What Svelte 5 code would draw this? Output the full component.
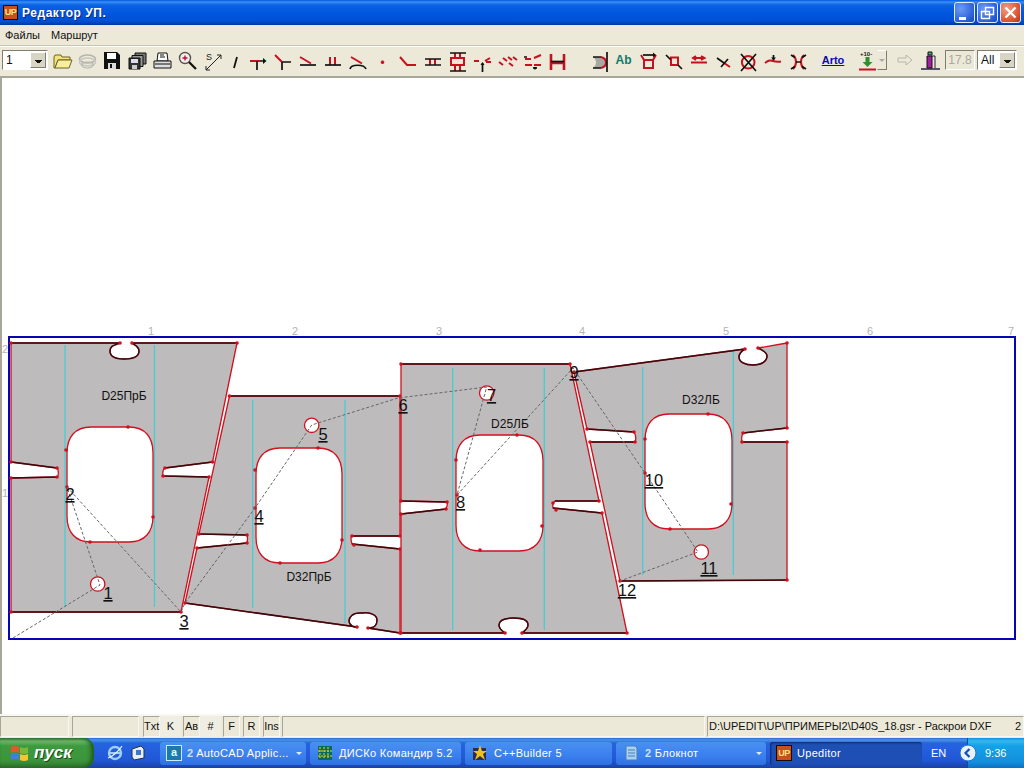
<script>
	// toolbar icons: k = black strokes, r = red strokes, drawn in a 25x24 box
	const leftTools = [
		{ k: 'M12 13V22M15 13H20', r: 'M5 13H15', a: 'M18 10l3.500 3-3.500 3z' },
		{ k: 'M12 14V22M12 14H21', r: 'M5 7L12 14' },
		{ k: 'M5 17H21', r: 'M5 9L16 15.500' },
		{ k: 'M5 17H21', r: 'M10 9V17M15 9V17' },
		{ k: 'M5 21C6 16 19 16 21 21', r: 'M6 9L17 15.500' },
		{ r: 'M12.500 12.500V16M10.800 14.200H14.200' },
		{ r: 'M5 9L12 17H21' },
		{ k: 'M5 11H21M5 17H21', r: 'M10 11V17M15 11V17' },
		{ k: 'M5 5H21M5 23H21', r: 'M10 5V10M15 5V10M10 17V23M15 17V23M6 10H19V17H6z' },
		{ k: 'M12.500 15V24', r: 'M4 13H9M15 13L20 10M16 14H21', a: 'M10.500 17l2-3 2 3z' },
		{ r: 'M4 14L8 17M8 10L12 13M14 15L18 18M13 9L17 12M18 9L22 12' },
		{ k: 'M4 9H7M13 20H17', r: 'M5 11H11M14 10L21 7M5 17H12M14 17H21', a: 'M13 19l2 3 2-3z' },
		{ k: 'M6 13.500H19', r: 'M6 6V22M19 6V22M6 15H19', thick: true }
	];
	const rightTools = [
		{ k: 'M7 9H15M7 20H15M21 4V24', r: 'M15 9C19 10 20 12 20 14.500C20 17 19 19 15 20', hatch: true },
		{ text: 'Ab' },
		{ k: 'M7 7H19', r: 'M5 7L8 12V20H17V12L20 7M8 12H17', a: 'M17 4.500l3 2.500-3 2.500z' },
		{ k: 'M5 7L9.500 11.500M17 17L21 21', r: 'M9 9.500H17V17H10V9.500' },
		{ r: 'M5 14.500H21M8 10H18M10 8L7 10L10 12M15 8L18.500 10L15 12' },
		{ k: 'M6 10L13 15M10 19L17 11', r: 'M13 15L19 19' },
		{ k: 'M5 6L20 23M20 6L5 23', r: 'M18.500 14.300A6.300 6.300 0 1 1 5.900 14.300A6.300 6.300 0 1 1 18.500 14.300' },
		{ k: 'M12.500 7V12', r: 'M4 15C8 12 9 12 12 13C15 14 17 14 20 13.500', a: 'M10 9.500l2.500 3 2.500-3z' },
		{ k: 'M5 7L9 9.500M20 7L16 9.500M5 21L9 18.500M20 21L16 18.500M10 14H15', r: 'M7 7C11 11 11 17 7 21M18 7C14 11 14 17 18 21' }
	];

	// outline of each sheet, slots and notches included; dark = edges the editor draws over in black
	const parts = [
		{
			d: 'M11 343H120C116 345 110 345 110 351C110 357 116 359 124 359C134 359 139 356 139 351C139 346 134 345 132 343H237L212.500 462L165 468Q162 470 163 476L209 477L181 612H11V478L57 477Q59 476 58 470L57 468L11 462Z',
			dark: 'M11 343H120M120 343C116 345 110 345 110 351C110 357 116 359 124 359C134 359 139 356 139 351C139 346 134 345 132 343M132 343H237M212.500 462L165 468M163 476L209 477M181 612H11M11 478L57 477M57 468L11 462',
			hole: [67, 427, 153, 542],
			dot: [97.7, 584],
			cyan: [[65, 345, 607], [154.5, 345, 607]],
			marks: [[11, 343], [237, 343], [181, 612], [11, 612], [11, 462], [11, 478], [57, 468], [57, 477], [165, 468], [163, 476], [212.5, 462], [209, 477], [120, 343], [132, 343], [66, 450], [67, 487], [128, 427], [90, 542], [153, 517]]
		},
		{
			d: 'M229.500 396H400V536H352Q350 538 352 544L400 549V633L368 628C376 628 377 624 377 620C377 614 368 612 362 613C352 612 349 618 349 621C349 625 354 628 357 627L185 603L197 548L247 543Q248 538 247 535L199 534Z',
			dark: 'M229.500 396H400M400 536H352M352 544L400 549M400 633L368 628C376 628 377 624 377 620C377 614 368 612 362 613C352 612 349 618 349 621C349 625 354 628 357 627L185 603M197 548L247 543M247 535L199 534',
			hole: [256, 448, 342, 563],
			dot: [311.7, 425.3],
			cyan: [[252.7, 400, 608], [345, 400, 623]],
			marks: [[229.5, 396], [400, 396], [400, 633], [185, 603], [199, 534], [197, 548], [247, 535], [247, 543], [352, 536], [354, 545], [400, 536], [400, 549], [357, 627], [368, 628], [255, 470], [255, 508], [342, 540], [318, 448], [280, 563]]
		},
		{
			d: 'M401 364H570L599 501H555Q552 503 553 508L602 513L627 633H522C526 630 528 628 528 625C528 620 522 618 514 618C504 618 499 620 499 625C499 629 502 631 505 633H401V514L446 509Q448 505 447 502L401 501Z',
			dark: 'M401 364H570M599 501H555M553 508L602 513M627 633H522C526 630 528 628 528 625C528 620 522 618 514 618C504 618 499 620 499 625C499 629 502 631 505 633H401M401 514L446 509M447 502L401 501',
			hole: [456, 435, 543, 551],
			dot: [486.7, 393],
			cyan: [[452.7, 368, 630], [544.3, 368, 630]],
			marks: [[401, 364], [570, 364], [627, 633], [401, 633], [401, 501], [401, 514], [447, 502], [446, 509], [553, 503], [556, 510], [599, 501], [602, 513], [505, 633], [522, 633], [456, 460], [457, 495], [542, 526], [517, 435], [480, 550]]
		},
		{
			d: 'M574 372L745 349C740 352 739 354 739 357C739 362 745 365 753 365C762 365 767 361 767 356C767 352 762 350 758 348L787 343V428L743 433Q741 437 742 442H787V580L620 581L590 442H635Q637 437 634 432L587 429Z',
			dark: 'M574 372L745 349C740 352 739 354 739 357C739 362 745 365 753 365C762 365 767 361 767 356C767 352 762 350 758 348M787 428L743 433M742 442H787M787 580L620 581M590 442H635M634 432L587 429',
			hole: [645, 414, 732, 529],
			dot: [701.3, 552],
			cyan: [[642.7, 367, 575], [733.3, 352, 575]],
			marks: [[574, 372], [787, 343], [787, 580], [620, 581], [587, 429], [634, 432], [635, 442], [590, 442], [743, 433], [742, 442], [787, 428], [787, 442], [745, 349], [758, 348], [645, 439], [645, 473], [731, 504], [708, 414], [670, 529]]
		}
	];

	function holePath([x1, y1, x2, y2]) {
		const rx = 24;
		const ry = 26;
		return `M${x1 + rx} ${y1}H${x2 - rx}C${x2 - 8} ${y1} ${x2} ${y1 + 10} ${x2} ${y1 + ry}V${y2 - ry}C${x2} ${y2 - 10} ${x2 - 8} ${y2} ${x2 - rx} ${y2}H${x1 + rx}C${x1 + 8} ${y2} ${x1} ${y2 - 10} ${x1} ${y2 - ry}V${y1 + ry}C${x1} ${y1 + 10} ${x1 + 8} ${y1} ${x1 + rx} ${y1}Z`;
	}

	const route = '13,638 100,585 67,487 181,612 185,603 255,508 311.7,425 398,398 486.7,387 457,495 573,368 645,473 698,552 620,581';

	const sheetNames = [
		{ t: 'D25ПрБ', x: 124, y: 400 },
		{ t: 'D32ПрБ', x: 309, y: 581 },
		{ t: 'D25ЛБ', x: 510, y: 428 },
		{ t: 'D32ЛБ', x: 701, y: 404 }
	];

	const routeNums = [
		[1, 108, 599], [2, 70, 500], [3, 184, 627], [4, 259, 522], [5, 323, 440], [6, 403, 411],
		[7, 491.5, 401], [8, 460.5, 508], [9, 574, 378], [10, 654, 486], [11, 709, 574], [12, 627, 596]
	];

	const rulerTop = [[151, 1], [295, 2], [439, 3], [582, 4], [726, 5], [870, 6], [1011, 7]];

	const flags = [
		{ t: 'Txt', w: 17, left: 143 },
		{ t: 'K', w: 21, left: 160, flat: true },
		{ t: 'Ав', w: 17, left: 183 },
		{ t: '#', w: 21, left: 200, flat: true },
		{ t: 'F', w: 17, left: 223 },
		{ t: 'R', w: 17, left: 243 },
		{ t: 'Ins', w: 17, left: 263 }
	];
</script>

<div class="window">
	<header class="titlebar">
		<span class="up-icon">UP</span>
		<span class="title">Редактор УП.</span>
		<div class="caption-btns">
			<button class="cap"><svg width="21" height="21" viewBox="0 0 21 21"><path d="M5 15h7v3H5z" fill="#fff" /></svg></button>
			<button class="cap"><svg width="21" height="21" viewBox="0 0 21 21"><path d="M8.500 5.500h8v7h-8zM4.500 9.500h8v7h-8z" fill="none" stroke="#fff" stroke-width="1.400" /></svg></button>
			<button class="cap close"><svg width="21" height="21" viewBox="0 0 21 21"><path d="M5.500 5.500l10 10M15.500 5.500l-10 10" stroke="#fff" stroke-width="2.400" /></svg></button>
		</div>
	</header>

	<nav class="menu">
		<span>Файлы</span>
		<span>Маршрут</span>
	</nav>

	<div class="toolbar">
		<div class="combo num"><span>1</span><i class="drop"></i></div>

		<svg class="tool" viewBox="0 0 25 24"><path d="M4 9l1-2h6l1 2h8v3H8L5 20H4z" fill="#f4e27a" stroke="#6b6420" /><path d="M8 12h14l-3 8H5z" fill="#f8ef9e" stroke="#6b6420" /></svg>
		<svg class="tool" viewBox="0 0 25 24"><ellipse cx="12.500" cy="11" rx="8" ry="4" fill="none" stroke="#b5b5ad" stroke-width="1.600" /><ellipse cx="12.500" cy="14" rx="8" ry="4" fill="none" stroke="#c8c8c0" stroke-width="1.600" /><ellipse cx="12.500" cy="17" rx="6" ry="3" fill="none" stroke="#b5b5ad" /></svg>
		<svg class="tool" viewBox="0 0 25 24"><path d="M4 4h13l3 3v14H4z" fill="#111" /><path d="M7 5h9v6H7z" fill="#fff" /><path d="M8 15h8v6H8z" fill="#ddd" /><path d="M10 16h2v4h-2z" fill="#111" /></svg>
		<svg class="tool" viewBox="0 0 25 24"><path d="M10 5h11v11H10z" fill="#777" stroke="#111" /><path d="M7 7.500h11v11H7z" fill="#999" stroke="#111" /><path d="M4 10h11v11H4z" fill="#333" stroke="#111" /><path d="M6 11h7v4H6z" fill="#dde" /><path d="M7 17h5v4H7z" fill="#ccc" /></svg>
		<svg class="tool" viewBox="0 0 25 24"><path d="M8 5h9l1 8H7z" fill="#fff" stroke="#111" /><path d="M10 7h4M10 9h5" stroke="#111" /><path d="M4 13h17v7H4z" fill="#ddd" stroke="#111" /><path d="M5 16h15" stroke="#111" /></svg>
		<svg class="tool" viewBox="0 0 25 24"><circle cx="10" cy="10" r="5.500" fill="#f5eef0" stroke="#555" stroke-width="1.400" /><path d="M10 7.500v5M7.500 10h5" stroke="#c01030" stroke-width="1.400" /><path d="M14 14l7 7" stroke="#111" stroke-width="2.200" /></svg>
		<svg class="tool" viewBox="0 0 25 24"><path d="M6 22L21 7M6 22v-4M6 22h4M21 7h-4M21 7v4" fill="none" stroke="#222" /><text x="6" y="12" class="s-mark">S</text></svg>
		<svg class="tool narrow" viewBox="0 0 20 24"><path d="M12 9l-3 11" stroke="#111" stroke-width="1.800" /></svg>

		{#each leftTools as tool}
			<svg class="tool" viewBox="0 0 25 24">
				{#if tool.r}<path class="red" class:thick={tool.thick} d={tool.r} />{/if}
				{#if tool.k}<path class="black" d={tool.k} />{/if}
				{#if tool.a}<path d={tool.a} fill="#111" />{/if}
			</svg>
		{/each}

		<span class="tool-gap"></span>

		{#each rightTools as tool}
			{#if tool.text}
				<span class="ab">{tool.text}</span>
			{:else}
				<svg class="tool" viewBox="0 0 25 24">
					{#if tool.hatch}<path d="M7 9H15C19 10 20 12 20 14.500C20 17 19 19 15 20H7C11 17 11 12 7 9z" fill="#a8a8a0" />{/if}
					{#if tool.r}<path class="red" d={tool.r} />{/if}
					{#if tool.k}<path class="black" d={tool.k} />{/if}
					{#if tool.a}<path d={tool.a} fill="#111" />{/if}
				</svg>
			{/if}
		{/each}

		<span class="arto">Arto</span>

		<svg class="tool" viewBox="0 0 25 24"><text x="5" y="8" class="tiny">+10-</text><path d="M10.500 9h4v5h3l-5 5-5-5h3z" fill="#2f8f2f" /><path d="M4 21.500h17" stroke="#c81020" stroke-width="2" /></svg>
		<span class="spin"><i></i></span>
		<svg class="tool arrow" viewBox="0 0 25 24"><path d="M5 10h8V7l6 5-6 5v-3H5z" fill="#ece9d8" stroke="#b8b6a8" /></svg>
		<svg class="tool" viewBox="0 0 25 24"><path d="M3 21h19" stroke="#556" stroke-width="2" /><path d="M9 8h5v12H9z" fill="#a020a0" stroke="#111" /><path d="M10 4h4v3h-4z" fill="#4a8" stroke="#111" /><path d="M14 8h3v12" fill="none" stroke="#223" /></svg>
		<div class="field">17.8</div>
		<div class="combo all"><span>All</span><i class="drop"></i></div>
	</div>

	<main class="canvas">
		<svg viewBox="0 78 1024 636" width="1024" height="636">
			<rect x="9" y="337" width="1006" height="302" fill="#fff" stroke="#0505b5" stroke-width="2" />

			{#each rulerTop as [x, n]}
				<text {x} y="335" class="ruler">{n}</text>
			{/each}
			<text x="5" y="353" class="ruler">2</text>
			<text x="5" y="497" class="ruler">1</text>

			{#each parts as p}
				<path d="{p.d}{holePath(p.hole)}" fill="#bdbbbc" fill-rule="evenodd" />
				<circle cx={p.dot[0]} cy={p.dot[1]} r="7.200" fill="#fff" />
				{#each p.cyan as [x, y1, y2]}
					<line x1={x} x2={x} {y1} {y2} class="bend" />
				{/each}
				<path d={p.d} class="edge" />
				<path d={p.dark} class="edge-dark" />
				<path d={holePath(p.hole)} class="edge" />
				<circle cx={p.dot[0]} cy={p.dot[1]} r="7.200" class="edge" />
				{#each p.marks as [x, y]}
					<circle cx={x} cy={y} r="1.800" fill="#d0101e" />
				{/each}
			{/each}

			<polyline points={route} class="route" />

			{#each sheetNames as s}
				<text x={s.x} y={s.y} class="sheet">{s.t}</text>
			{/each}
			{#each routeNums as [n, x, y]}
				<text {x} {y} class="num-mark">{n}</text>
			{/each}
		</svg>
	</main>

	<footer class="status">
		<span class="pane" style="left:0;width:69px"></span>
		<span class="pane" style="left:72px;width:67px"></span>
		{#each flags as f}
			<span class="pane flag" class:flat={f.flat} style="left:{f.left}px;width:{f.w}px">{f.t}</span>
		{/each}
		<span class="pane" style="left:282px;width:423px"></span>
		<span class="pane path" style="left:707px;width:317px">D:\UPEDIT\UP\ПРИМЕРЫ2\D40S_18.gsr - Раскрои DXF<b>2</b></span>
	</footer>

	<div class="taskbar">
		<button class="start">
			<svg width="22" height="20" viewBox="0 0 22 20"><path d="M2 4q4-2 8 0v6q-4-2-8 0z" fill="#e8552a" /><path d="M11 4q4 2 8 0v6q-4 2-8 0z" fill="#7ab839" /><path d="M2 11q4-2 8 0v6q-4-2-8 0z" fill="#3f7fe0" /><path d="M11 11q4 2 8 0v6q-4 2-8 0z" fill="#f3c52f" /></svg>
			<span>пуск</span>
		</button>
		<svg class="quick first" width="18" height="18" viewBox="0 0 18 18"><circle cx="9" cy="9" r="6" fill="none" stroke="#9fd0ff" stroke-width="2.400" /><path d="M4 9h10" stroke="#9fd0ff" stroke-width="2" /><path d="M2 14C6 13 13 7 16 2" fill="none" stroke="#e8f2ff" stroke-width="1.200" /></svg>
		<svg class="quick" width="18" height="18" viewBox="0 0 18 18"><path d="M3 5l9-3 3 3v9l-10 2-2-3z" fill="#e6eef8" stroke="#234" /><path d="M7 6h5v5H7z" fill="#3b78c8" /></svg>

		<div class="tasks">
			<div class="task" style="width:146px">
				<span class="acad">a</span>
				<span class="label"><em>2</em> AutoCAD Applic...</span>
				<i class="group"></i>
			</div>
			<div class="task" style="width:151px">
				<svg width="18" height="18" viewBox="0 0 18 18"><path d="M2 2h14v14H2z" fill="#0b6a5e" /><path d="M4 3v12M8 3v12M12 3v12M2 7h14M2 12h14" stroke="#e6d820" stroke-dasharray="2 1" /></svg>
				<span class="label">ДИСКо Командир 5.2</span>
			</div>
			<div class="task" style="width:147px">
				<svg width="18" height="18" viewBox="0 0 18 18"><path d="M2 4h13v12H2z" fill="#2b2d55" /><path d="M9 1l2 6h5l-4 3 2 6-5-4-5 4 2-6-4-3h5z" fill="#f0c020" /></svg>
				<span class="label">C++Builder 5</span>
			</div>
			<div class="task" style="width:150px">
				<svg width="18" height="18" viewBox="0 0 18 18"><path d="M4 2h9l2 2v12H4z" fill="#a8d0f0" stroke="#4a7fb5" /><path d="M6 6h7M6 9h7M6 12h7" stroke="#4a7fb5" /></svg>
				<span class="label"><em>2</em> Блокнот</span>
				<i class="group"></i>
			</div>
			<div class="task active" style="width:152px">
				<span class="up-icon small">UP</span>
				<span class="label">Upeditor</span>
			</div>
		</div>

		<span class="lang">EN</span>
		<div class="tray">
			<span class="chevron"><svg width="18" height="18" viewBox="0 0 18 18"><circle cx="9" cy="9" r="8" fill="#e8f2fc" stroke="#1f6fd0" /><path d="M10.500 5l-4 4 4 4" fill="none" stroke="#1450b0" stroke-width="2.200" /></svg></span>
			<span class="clock">9:36</span>
		</div>
	</div>
</div>

<style>
	:global(body) {
		margin: 0;
		background: #ece9d8;
	}

	.window {
		width: 1024px;
		height: 768px;
		display: flex;
		flex-direction: column;
		overflow: hidden;
		font-family: 'Liberation Sans', Arial, sans-serif;
		background: #ece9d8;
		color: #111;
	}

	/* title bar */
	.titlebar {
		height: 25px;
		flex: none;
		display: flex;
		align-items: center;
		padding: 0 3px;
		box-sizing: border-box;
		background: linear-gradient(#0058e0 0, #3a8ff2 2px, #0a62e4 5px, #0055dd 14px, #0050d4 21px, #0038a0 25px);
		color: #fff;
	}

	.up-icon {
		width: 15px;
		height: 15px;
		flex: none;
		display: inline-block;
		background: #c8501c;
		border: 1px solid #1a0a00;
		box-sizing: border-box;
		color: #ffe080;
		font: bold 9px/13px 'Liberation Sans', sans-serif;
		text-align: center;
		letter-spacing: -0.5px;
	}

	.title {
		margin-left: 4px;
		font-size: 12px;
		font-weight: bold;
		letter-spacing: 0.55px;
		text-shadow: 1px 1px #0a2a80;
	}

	.caption-btns {
		margin-left: auto;
		display: flex;
		gap: 2px;
	}

	.cap {
		width: 21px;
		height: 21px;
		padding: 0;
		border: 1px solid #e4ecff;
		border-radius: 3px;
		background: radial-gradient(circle at 30% 30%, #6b9cf0, #2a5fd8 70%, #1a46b8);
		display: block;
	}

	.cap svg {
		display: block;
		margin: -1px;
	}

	.cap.close {
		background: radial-gradient(circle at 30% 30%, #f0a080, #d8502c 70%, #b83010);
	}

	/* menu */
	.menu {
		height: 21px;
		flex: none;
		display: flex;
		align-items: center;
		gap: 11px;
		padding: 0 5px;
		box-sizing: border-box;
		font-size: 11px;
		border-bottom: 1px solid #c8c5b2;
	}

	/* toolbar */
	.toolbar {
		height: 32px;
		flex: none;
		display: flex;
		align-items: center;
		padding: 0 0 3px 2px;
		box-sizing: border-box;
		border-top: 1px solid #fff;
		border-bottom: 2px solid #a8a698;
	}

	.tool {
		width: 25px;
		height: 24px;
		flex: none;
	}

	.tool.narrow {
		width: 20px;
	}

	.tool-gap {
		width: 16px;
		flex: none;
	}

	.red,
	.black {
		fill: none;
	}

	.red {
		stroke: #c81020;
		stroke-width: 2;
	}

	.red.thick {
		stroke-width: 2.600;
	}

	.black {
		stroke: #111;
		stroke-width: 1.700;
	}

	.s-mark {
		font: 9px 'Liberation Sans', sans-serif;
		fill: #222;
	}

	.tiny {
		font: bold 6px 'Liberation Sans', sans-serif;
		fill: #222;
	}

	.combo {
		height: 20px;
		flex: none;
		display: flex;
		align-items: center;
		justify-content: space-between;
		box-sizing: border-box;
		background: #fff;
		border: 1px solid;
		border-color: #807e72 #fff #fff #807e72;
		font-size: 12px;
		padding-left: 3px;
	}

	.combo.num {
		width: 46px;
		margin-right: 2px;
	}

	.combo.all {
		width: 40px;
	}

	.drop {
		width: 16px;
		height: 16px;
		margin-right: 1px;
		background:
			linear-gradient(#111, #111) center 7px / 7px 1px no-repeat,
			linear-gradient(#111, #111) center 8px / 5px 1px no-repeat,
			linear-gradient(#111, #111) center 9px / 3px 1px no-repeat,
			#d8d5c5;
		border: 1px solid;
		border-color: #fff #807e72 #807e72 #fff;
		box-sizing: border-box;
	}

	.ab {
		width: 25px;
		flex: none;
		text-align: center;
		font-size: 12px;
		font-weight: bold;
		color: #0f7a6a;
		font-family: 'Liberation Sans', sans-serif;
	}

	.arto {
		width: 44px;
		flex: none;
		text-align: center;
		font-size: 11px;
		font-weight: bold;
		color: #0a0ab0;
		text-decoration: underline;
	}

	.spin {
		width: 10px;
		height: 20px;
		flex: none;
		margin-right: 6px;
		margin-left: -3px;
		box-sizing: border-box;
		border: 1px solid;
		border-color: #fff #807e72 #807e72 #ece9d8;
		position: relative;
	}

	.spin i {
		position: absolute;
		left: 1px;
		top: 8px;
		border: 3px solid transparent;
		border-top-color: #aaa;
	}

	.field {
		width: 30px;
		height: 20px;
		flex: none;
		margin-left: 2px;
		margin-right: 2px;
		box-sizing: border-box;
		border: 1px solid;
		border-color: #807e72 #fff #fff #807e72;
		color: #a9a89e;
		font-size: 12px;
		line-height: 18px;
		text-align: center;
	}

	/* drawing area */
	.canvas {
		height: 636px;
		flex: none;
		background: #fff;
		overflow: hidden;
		box-shadow: inset 2px 0 #a8a698;
	}

	.canvas svg {
		display: block;
	}

	.ruler {
		font: 11px 'Liberation Sans', sans-serif;
		fill: #b4b4b4;
		text-anchor: middle;
	}

	.bend {
		stroke: #3cd0d8;
		stroke-width: 1.200;
	}

	.edge,
	.edge-dark {
		fill: none;
		stroke-linejoin: round;
	}

	.edge {
		stroke: #d0101e;
		stroke-width: 1.300;
	}

	.edge-dark {
		stroke: #3a0a0e;
		stroke-width: 1.500;
	}

	.route {
		fill: none;
		stroke: #666;
		stroke-width: 1;
		stroke-dasharray: 3 2;
	}

	.sheet {
		font: 12px 'Liberation Sans', sans-serif;
		fill: #111;
		text-anchor: middle;
	}

	.num-mark {
		font: 16.500px 'Liberation Sans', sans-serif;
		fill: #111;
		text-anchor: middle;
		text-decoration: underline;
	}

	/* status bar */
	.status {
		position: relative;
		height: 24px;
		flex: none;
		border-top: 2px solid #f8f7f2;
		box-sizing: border-box;
	}

	.pane {
		position: absolute;
		top: 0;
		height: 21px;
		box-sizing: border-box;
		border: 1px solid;
		border-color: #a8a698 #f8f7f2 #f8f7f2 #a8a698;
		font-size: 11px;
		line-height: 19px;
	}

	.flag {
		text-align: center;
		white-space: nowrap;
	}

	.flag.flat {
		border-color: transparent;
		background: #f0eee2;
	}

	.path {
		padding-left: 1px;
		white-space: nowrap;
	}

	.path b {
		position: absolute;
		right: 2px;
		font-weight: normal;
	}

	/* XP taskbar */
	.taskbar {
		height: 30px;
		flex: none;
		display: flex;
		align-items: center;
		background: linear-gradient(#3168d5 0, #4993e6 2px, #2663e0 5px, #2157d7 22px, #1941a5 30px);
		color: #fff;
		font-size: 11px;
	}

	.start {
		width: 94px;
		height: 30px;
		flex: none;
		display: flex;
		align-items: center;
		gap: 3px;
		padding: 0 0 0 9px;
		border: 0;
		border-radius: 0 10px 10px 0;
		background: linear-gradient(#388438 0, #6db86d 3px, #3d9a3d 8px, #3c953c 22px, #2e742e 30px);
		box-shadow: inset -3px 0 4px #1e5a1e;
		color: #fff;
		font: italic bold 17px 'Liberation Sans', sans-serif;
		text-shadow: 1px 1px #1a4a1a;
	}

	.quick {
		flex: none;
		margin-left: 5px;
	}

	.quick.first {
		margin-left: 12px;
	}

	.tasks {
		display: flex;
		gap: 4px;
		margin-left: 13px;
		flex: none;
	}

	.task {
		height: 23px;
		box-sizing: border-box;
		display: flex;
		align-items: center;
		gap: 5px;
		padding: 0 6px;
		border-radius: 3px;
		background: linear-gradient(#4a90f0, #3a80ee 60%, #2e70e0);
		position: relative;
		white-space: nowrap;
	}

	.task.active {
		background: #1e4fb4;
		box-shadow: inset 1px 1px 2px #0c2a70;
	}

	.task em {
		font-style: normal;
		font-weight: bold;
		color: #cfe0ff;
	}

	.group {
		position: absolute;
		right: 4px;
		top: 10px;
		border: 3px solid transparent;
		border-top-color: #dfeaff;
	}

	.label {
		letter-spacing: 0.3px;
	}

	.acad {
		width: 16px;
		height: 16px;
		flex: none;
		box-sizing: border-box;
		border: 1px solid #cfe8ff;
		background: #1a7ab0;
		color: #dff;
		font: bold 11px/13px 'Liberation Sans', sans-serif;
		text-align: center;
	}

	.up-icon.small {
		width: 16px;
		height: 16px;
		line-height: 14px;
	}

	.lang {
		margin-left: 9px;
		flex: none;
	}

	.tray {
		margin-left: auto;
		width: 57px;
		height: 30px;
		flex: none;
		display: flex;
		align-items: center;
		box-sizing: border-box;
		background: linear-gradient(#1790e0 0, #30b8f0 3px, #16a0e8 8px, #128fdc 24px, #0e6fc0 30px);
		border-left: 1px solid #0a4fa0;
	}

	.chevron {
		display: block;
		height: 18px;
		margin-left: -9px;
	}

	.clock {
		margin-left: 8px;
	}
</style>
